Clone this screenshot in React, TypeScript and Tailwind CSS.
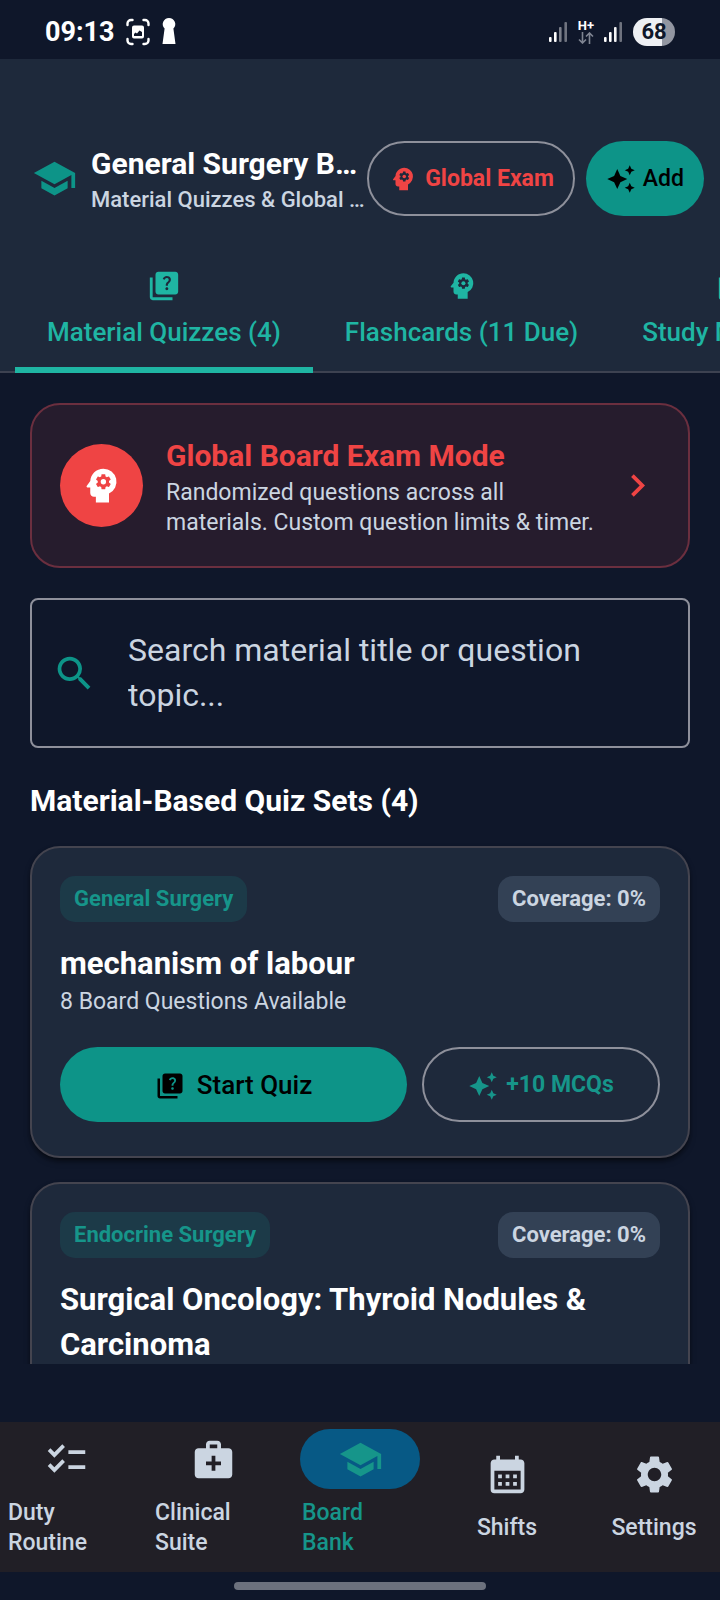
import { useState } from 'react';
import type { IconType } from 'react-icons';
import {
  MdAutoAwesome,
  MdCalendarMonth,
  MdChecklist,
  MdChevronRight,
  MdLibraryBooks,
  MdMedicalServices,
  MdPsychology,
  MdQuiz,
  MdSchool,
  MdSearch,
  MdSettings,
} from 'react-icons/md';

interface QuizSet {
  id: string;
  topic: string;
  title: string;
  questions: number;
  coverage: number;
}

const quizSets: QuizSet[] = [
  { id: 'labour', topic: 'General Surgery', title: 'mechanism of labour', questions: 8, coverage: 0 },
  { id: 'thyroid', topic: 'Endocrine Surgery', title: 'Surgical Oncology: Thyroid Nodules & Carcinoma', questions: 8, coverage: 0 },
];

const tabs: { id: string; label: string; icon: IconType }[] = [
  { id: 'quizzes', label: 'Material Quizzes (4)', icon: MdQuiz },
  { id: 'flashcards', label: 'Flashcards (11 Due)', icon: MdPsychology },
  { id: 'materials', label: 'Study Materials', icon: MdLibraryBooks },
];

const navItems: { id: string; lines: string[]; icon: IconType }[] = [
  { id: 'duty', lines: ['Duty', 'Routine'], icon: MdChecklist },
  { id: 'clinical', lines: ['Clinical', 'Suite'], icon: MdMedicalServices },
  { id: 'board', lines: ['Board', 'Bank'], icon: MdSchool },
  { id: 'shifts', lines: ['Shifts'], icon: MdCalendarMonth },
  { id: 'settings', lines: ['Settings'], icon: MdSettings },
];

function SignalBars({ level }: { level: number }) {
  return (
    <svg className="w-[19px] h-5" viewBox="0 0 19 20" fill="#fff">
      <rect x="0" y="15" width="2.6" height="5" rx="1" />
      <rect x="5" y="10" width="2.6" height="10" rx="1" opacity={level > 1 ? 1 : 0.4} />
      <rect x="10" y="5" width="2.6" height="15" rx="1" opacity={level > 2 ? 0.95 : 0.45} />
      <rect x="15.4" y="0" width="2.6" height="20" rx="1" opacity="0.4" />
    </svg>
  );
}

function StatusBar() {
  return (
    <div className="h-[59px] shrink-0 pt-1 px-[45px] flex items-center justify-between">
      <div className="flex items-center gap-[11px]">
        <span className="text-[27px] leading-8 font-bold text-white">09:13</span>
        <svg className="w-6 h-8" viewBox="0 0 24 32" fill="none" stroke="#fff" strokeWidth="2.4" strokeLinecap="round">
          <path d="M1.5 9V7.500a3.500 3.500 0 0 1 3.500-3.500h1.500M17.500 4H19a3.500 3.500 0 0 1 3.500 3.500V9M22.500 23v1.500A3.500 3.500 0 0 1 19 28h-1.500M6.500 28H5a3.500 3.500 0 0 1-3.500-3.500V23" />
          <path d="M8 9.500h8a2 2 0 0 1 2 2v9a2 2 0 0 1-2 2H8a2 2 0 0 1-2-2v-9a2 2 0 0 1 2-2zm0 10.500h8v-4l-2.500-1.500-2.500 3-1.500-1L8 18z" fill="#fff" fillRule="evenodd" stroke="none" />
        </svg>
        <svg className="w-4 h-8" viewBox="0 0 16 32" fill="#fff">
          <path d="M8 2a6.200 6.200 0 0 1 4.400 10.600L14.500 28h-13l2.100-15.400A6.200 6.200 0 0 1 8 2z" />
        </svg>
      </div>
      <div className="flex items-center gap-[10px]">
        <SignalBars level={2} />
        <span className="flex flex-col items-center text-white">
          <span className="text-[13px] leading-3 font-bold">H+</span>
          <svg className="w-4 h-3" viewBox="0 0 16 12" fill="none" stroke="#7f8592" strokeWidth="1.600">
            <path d="M4.500 0v10.500M1 7.500l3.500 3.500L8 7.500M11.500 12V1.500M8 4.500L11.500 1 15 4.500" />
          </svg>
        </span>
        <SignalBars level={3} />
        <span className="w-[42px] h-7 rounded-full flex items-center justify-center bg-linear-to-r from-[#eef0f4] from-68% to-[#9296a1] to-68% text-[22px] leading-7 font-bold text-[#0f172a]">
          68
        </span>
      </div>
    </div>
  );
}

function Header({ tab, onTab }: { tab: string; onTab: (id: string) => void }) {
  return (
    <header className="shrink-0 bg-[#1e293b] pt-[59px]">
      <div className="h-[120px] pl-8 pr-4 flex items-center">
        <MdSchool className="size-[45px] shrink-0 text-[#0d9488]" />
        <div className="flex-1 min-w-0 ml-[14px] pt-1">
          <h1 className="text-[30px] leading-10 font-bold text-white truncate">General Surgery Board</h1>
          <p className="text-[22px] leading-8 font-medium text-[#cbd5e1] truncate">Material Quizzes &amp; Global Exam</p>
        </div>
        <div className="flex shrink-0 gap-[11px]">
          <button className="h-[75px] px-[19px] pt-[2px] flex items-center gap-[7px] rounded-full border-2 border-[#8e909b] text-[23px] font-bold text-[#ef4444]">
            <MdPsychology className="size-[30px]" />
            Global Exam
          </button>
          <button className="h-[75px] px-5 pt-[2px] flex items-center gap-[7px] rounded-full bg-[#0d9488] text-[23px] font-medium text-black">
            <MdAutoAwesome className="size-[30px]" />
            Add
          </button>
        </div>
      </div>

      <div role="tablist" className="h-[135px] px-[15px] flex overflow-hidden shadow-[inset_0_-2px_0_#3d4251]">
        {tabs.map(({ id, label, icon: Icon }) => (
          <button
            key={id}
            role="tab"
            aria-selected={tab === id}
            onClick={() => onTab(id)}
            className={`h-full shrink-0 px-8 pt-[31px] flex flex-col items-center gap-[11px] text-[26px] leading-[36px] font-medium text-[#1fb5a3] whitespace-nowrap ${tab === id ? 'border-b-6 border-[#1fb5a3]' : ''}`}
          >
            <Icon className="size-[34px]" />
            {label}
          </button>
        ))}
      </div>
    </header>
  );
}

function ExamBanner() {
  return (
    <button className="w-full p-7 flex items-center text-left rounded-[30px] border-2 border-[#6b2f3f] bg-[#261c2d]">
      <span className="size-[83px] shrink-0 flex items-center justify-center rounded-full bg-[#ef4444]">
        <MdPsychology className="size-[45px] text-white" />
      </span>
      <span className="flex-1 min-w-0 ml-[23px] mr-3">
        <span className="block text-[30px] leading-[45px] font-bold text-[#ef4444]">Global Board Exam Mode</span>
        <span className="block text-[23px] leading-[30px] text-[#cbd5e1]">
          Randomized questions across all
          <br />
          materials. Custom question limits &amp; timer.
        </span>
      </span>
      <MdChevronRight className="size-[45px] shrink-0 text-[#ef4444]" />
    </button>
  );
}

function QuizCard({ quiz }: { quiz: QuizSet }) {
  return (
    <article className="px-7 pt-7 pb-[34px] rounded-[30px] border-2 border-[#44444f] bg-[#1e293b] shadow-md shadow-black/50">
      <div className="flex items-center justify-between text-[22px] leading-[30px] font-bold">
        <span className="px-[14px] py-2 rounded-[15px] bg-[#1c3a48] text-[#16958a]">{quiz.topic}</span>
        <span className="px-[14px] py-2 rounded-[15px] bg-[#334155] text-[#cbd5e1]">Coverage: {quiz.coverage}%</span>
      </div>
      <h3 className="mt-[19px] text-[31px] leading-[45px] font-bold text-white">{quiz.title}</h3>
      <p className="mt-px text-[23px] leading-[30px] text-[#cbd5e1]">{quiz.questions} Board Questions Available</p>
      <div className="mt-[30px] flex gap-[15px]">
        <button className="h-[75px] flex-1 pt-[2px] flex items-center justify-center gap-3 rounded-full bg-[#0d9488] text-[26px] font-medium text-black">
          <MdQuiz className="size-[30px]" />
          Start Quiz
        </button>
        <button className="h-[75px] w-[238px] pt-[2px] flex items-center justify-center gap-2 rounded-full border-2 border-[#8e909b] text-[23px] font-bold text-[#16958a]">
          <MdAutoAwesome className="size-[30px]" />
          +10 MCQs
        </button>
      </div>
    </article>
  );
}

function BottomNav({ active, onSelect }: { active: string; onSelect: (id: string) => void }) {
  return (
    <nav className="h-[150px] shrink-0 pb-[7px] flex items-center gap-[15px] bg-[#211f26]">
      {navItems.map(({ id, lines, icon: Icon }) => {
        const on = id === active;
        return (
          <button
            key={id}
            onClick={() => onSelect(id)}
            className={`flex-1 min-w-0 flex flex-col items-center gap-[9px] ${on ? 'text-[#16958a]' : 'text-[#cbd5e1]'}`}
          >
            <span className={`w-[120px] h-[60px] flex items-center justify-center rounded-full ${on ? 'bg-[#075985]' : ''}`}>
              <Icon className="size-[45px]" />
            </span>
            <span className={`w-full px-2 text-[23px] leading-[30px] font-medium ${lines.length > 1 ? 'text-left' : 'text-center'}`}>
              {lines.map((line) => (
                <span key={line} className="block">{line}</span>
              ))}
            </span>
          </button>
        );
      })}
    </nav>
  );
}

export default function App() {
  const [tab, setTab] = useState('quizzes');
  const [section, setSection] = useState('board');
  const [query, setQuery] = useState('');

  const visible = quizSets.filter((q) => `${q.title} ${q.topic}`.toLowerCase().includes(query.toLowerCase()));

  return (
    <div className="h-screen flex flex-col overflow-hidden bg-[#0f172a] font-[Roboto,sans-serif]">
      <StatusBar />
      <Header tab={tab} onTab={setTab} />

      <main className="flex-1 min-h-0 mb-[58px] px-[30px] pt-[30px] overflow-hidden">
        <ExamBanner />

        <label className="mt-[30px] pl-5 pr-7 py-7 flex items-center gap-[31px] rounded-lg border-2 border-[#8e909b]">
          <MdSearch className="size-[45px] shrink-0 text-[#0d9488]" />
          <textarea
            rows={2}
            aria-label="Search quizzes"
            value={query}
            onChange={(e) => setQuery(e.target.value)}
            placeholder="Search material title or question topic..."
            className="block flex-1 min-w-0 resize-none overflow-hidden bg-transparent text-[32px] leading-[45px] text-white placeholder:text-[#cbd5e1] outline-none"
          />
        </label>

        <h2 className="mt-[30px] mb-[23px] text-[30px] leading-[45px] font-bold text-white">Material-Based Quiz Sets (4)</h2>

        <div className="flex flex-col gap-6">
          {visible.map((quiz) => (
            <QuizCard key={quiz.id} quiz={quiz} />
          ))}
        </div>
      </main>

      <BottomNav active={section} onSelect={setSection} />
      <div className="h-7 shrink-0 flex items-center justify-center">
        <span className="w-[35%] h-2 rounded-full bg-[#6c717d]" />
      </div>
    </div>
  );
}
